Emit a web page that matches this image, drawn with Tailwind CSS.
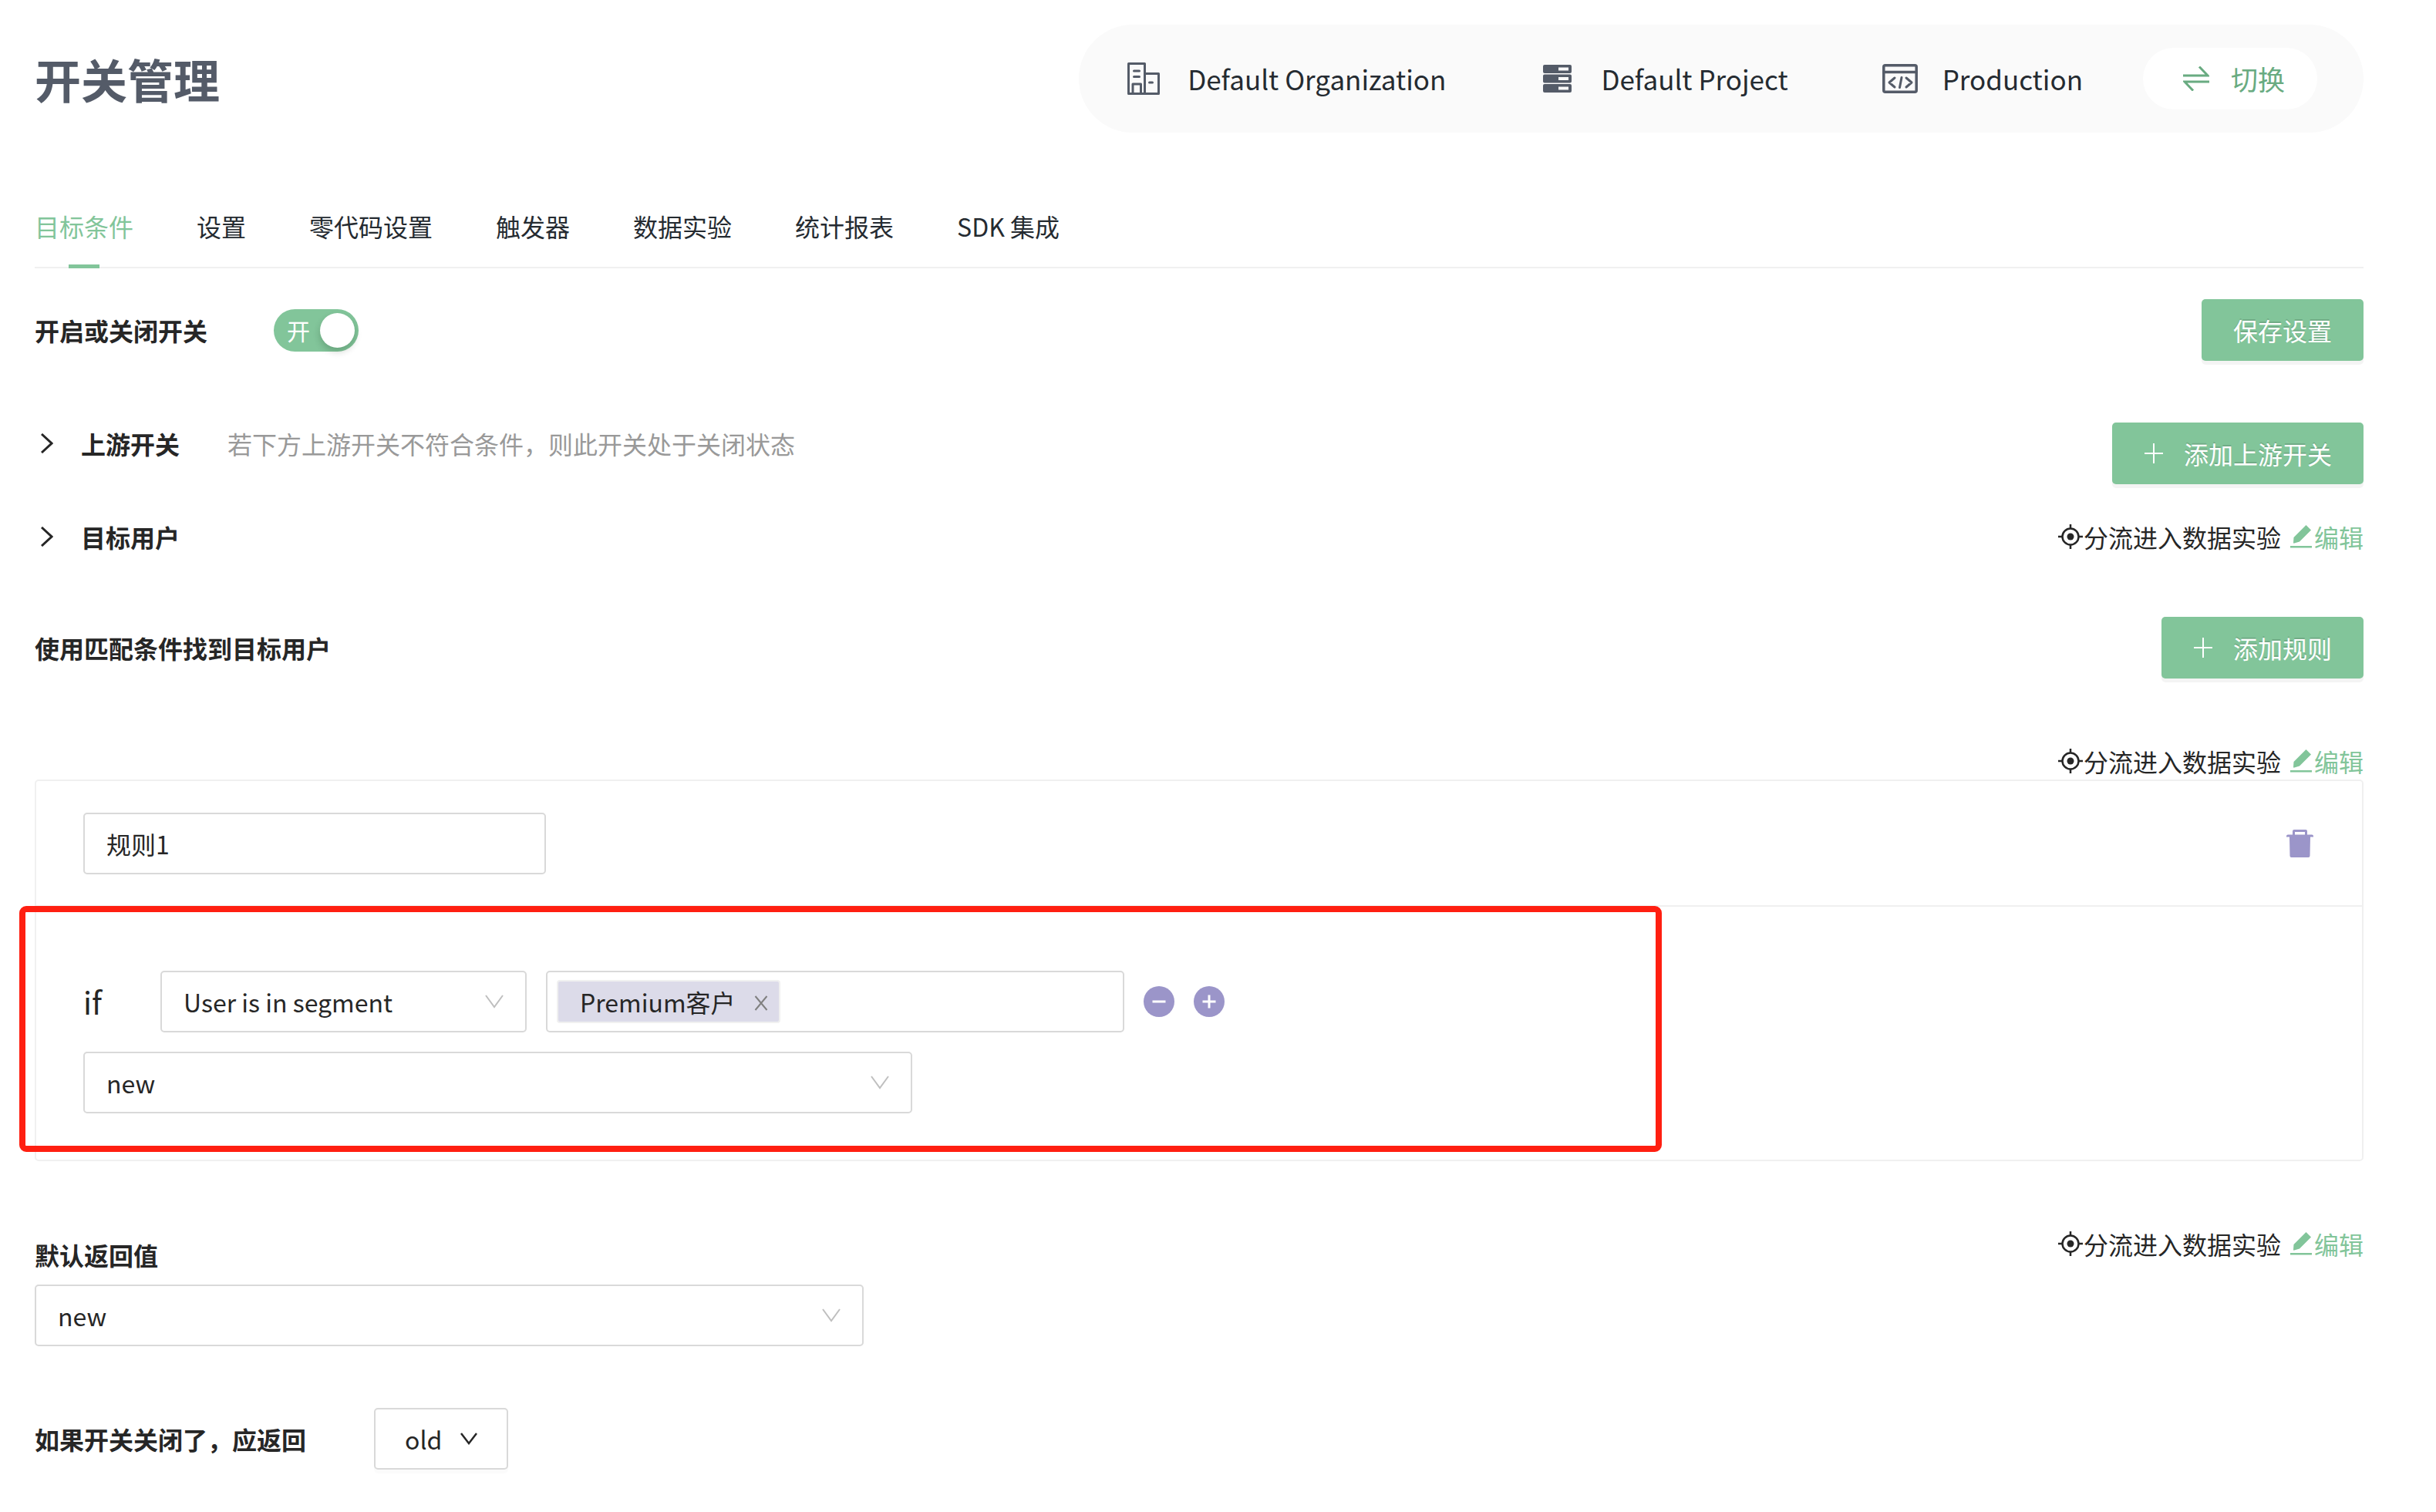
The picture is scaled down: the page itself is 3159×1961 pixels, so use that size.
<!DOCTYPE html>
<html lang="zh-CN">
<head>
<meta charset="utf-8">
<meta name="viewport" content="width=device-width, initial-scale=1">
<title>开关管理</title>
<script src="https://cdn.jsdelivr.net/npm/@tailwindcss/browser@4"></script>
</head>
<body class="bg-white text-[#262626] text-[32px] leading-[46px] font-['Noto_Sans_CJK_SC',sans-serif]">
<svg class="hidden" aria-hidden="true">
  <symbol id="down" viewBox="0 0 24 18"><path d="M1 1l11 15L23 1" fill="none" stroke="currentColor" stroke-width="2"/></symbol>
  <symbol id="right" viewBox="0 0 16 26"><path d="M1 1l13 12L1 25" fill="none" stroke="currentColor" stroke-width="3"/></symbol>
  <symbol id="plus" viewBox="0 0 26 26"><path d="M13 0v26M1 13h24" fill="none" stroke="currentColor" stroke-width="2"/></symbol>
  <symbol id="aim" viewBox="0 0 32 32"><circle cx="16" cy="16" r="10.5" fill="none" stroke="currentColor" stroke-width="2.5"/><circle cx="16" cy="16" r="4.5" fill="currentColor"/><path d="M16 0v6M16 26v6M0 16h6M26 16h6" stroke="currentColor" stroke-width="2.5"/></symbol>
  <symbol id="edit" viewBox="0 0 28 30"><path d="M0 27h28v2.500H0zM20.500 0l6.500 6.500L12 21.500l-7.500 2.200L4 23l.5-7z" fill="currentColor"/></symbol>
</svg>

<div class="pl-[45px] pr-[94px] pt-8 pb-[55px]">
  <header class="flex items-center justify-between">
    <h1 class="text-[60px] leading-[72px] font-bold text-[#545b68]">开关管理</h1>
    <div class="flex h-[140px] items-center rounded-full bg-[#fafafa] pl-[63px] pr-[60px] text-[35px] leading-[52px] text-[#252b31]">
      <svg class="mr-9 h-[42px] w-[42px] text-[#545b68]" viewBox="0 0 42 42" fill="none" stroke="currentColor" stroke-width="3" stroke-linejoin="round" aria-hidden="true"><path d="M1.500 40.500v-39h21v39zM22.500 14.500h18v26h-18M7 40V28h10.500v12"/><path d="M8.500 11h7M8.500 18.500h7M28.500 26h4" stroke-linecap="round"/></svg>
      <span class="mr-[126px]">Default Organization</span>
      <svg class="mr-[38px] h-9 w-[37px] text-[#545b68]" viewBox="0 0 37 36" aria-hidden="true"><path fill="currentColor" fill-rule="evenodd" d="M2 0h33q2 0 2 2v7q0 2-2 2H2q-2 0-2-2V2q0-2 2-2zM20 3.500v4h13v-4zM2 12.500h33q2 0 2 2v7q0 2-2 2H2q-2 0-2-2v-7q0-2 2-2zM20 16v4h13v-4zM2 25h33q2 0 2 2v7q0 2-2 2H2q-2 0-2-2v-7q0-2 2-2zM20 28.500v4h13v-4z"/></svg>
      <span class="mr-[122px]">Default Project</span>
      <svg class="mr-8 h-[38px] w-[46px] text-[#545b68]" viewBox="0 0 46 38" fill="none" stroke="currentColor" stroke-width="3.500" stroke-linejoin="round" stroke-linecap="round" aria-hidden="true"><rect x="1.800" y="1.800" width="42.400" height="34.400" rx="2"/><path d="M2 10.500h42"/><path d="M16 18l-7 6 7 6M31 18l7 6-7 6M25 17.500l-2.500 13" stroke-width="3"/></svg>
      <span class="mr-[78px]">Production</span>
      <button type="button" class="flex h-20 items-center rounded-full bg-white px-[42px] pl-[52px] text-[35px] text-[#69ab81]">
        <svg class="mr-7 h-8 w-[34px]" viewBox="0 0 34 32" fill="none" stroke="currentColor" stroke-width="3" aria-hidden="true"><path d="M0 12h32L21 .5M34 20H2l11 11.500"/></svg>切换
      </button>
    </div>
  </header>

  <nav class="mt-[70px] flex gap-[82px] border-b-2 border-[#f0f0f0] pt-7 text-[#252b31]">
    <a href="#target" class="relative pb-[30px] text-[#82c59a]">目标条件<span class="absolute -bottom-0.5 left-1/2 h-[5px] w-10 -translate-x-1/2 bg-[#82c59a]"></span></a>
    <a href="#settings">设置</a>
    <a href="#nocode">零代码设置</a>
    <a href="#triggers">触发器</a>
    <a href="#experiments">数据实验</a>
    <a href="#reports">统计报表</a>
    <a href="#sdk">SDK 集成</a>
  </nav>

  <main>
    <div class="mt-10 flex h-20 items-center">
      <span id="toggle-label" class="font-bold">开启或关闭开关</span>
      <button type="button" role="switch" aria-checked="true" aria-labelledby="toggle-label" class="ml-[86px] flex h-[55px] w-[110px] items-center justify-between rounded-full bg-[#82c59a] pl-[17px] pr-[5px] text-[30px] leading-[55px] text-white">开<span class="size-[45px] rounded-full bg-white shadow-[0_5px_10px_rgba(0,35,11,0.2)]"></span></button>
      <button type="button" class="ml-auto h-20 rounded-[5px] bg-[#82c59a] px-[41px] text-white shadow-[0_5px_0_rgba(0,0,0,0.045)] text-shadow-[0_-2px_0_rgb(0_0_0/0.12)]">保存设置</button>
    </div>

    <div class="mt-20 flex h-20 items-start">
      <button type="button" class="flex h-[54px] items-center pl-2 font-bold"><svg class="mr-9 h-[26px] w-4" aria-hidden="true"><use href="#right"/></svg>上游开关</button>
      <span class="ml-[62px] leading-[54px] text-[#999999]">若下方上游开关不符合条件，则此开关处于关闭状态</span>
      <button type="button" class="ml-auto flex h-20 items-center rounded-[5px] bg-[#82c59a] px-[41px] text-white shadow-[0_5px_0_rgba(0,0,0,0.045)] text-shadow-[0_-2px_0_rgb(0_0_0/0.12)]"><svg class="mr-[26px] size-[26px]" aria-hidden="true"><use href="#plus"/></svg>添加上游开关</button>
    </div>

    <div class="mt-[45px] flex items-center justify-between">
      <button type="button" class="flex items-center pl-2 font-bold"><svg class="mr-9 h-[26px] w-4" aria-hidden="true"><use href="#right"/></svg>目标用户</button>
      <div class="flex items-center"><svg class="mr-px size-8" aria-hidden="true"><use href="#aim"/></svg>分流进入数据实验<a href="#edit-users" class="ml-3 flex items-center text-[#82c59a]"><svg class="mr-[3px] h-[30px] w-7" aria-hidden="true"><use href="#edit"/></svg>编辑</a></div>
    </div>

    <div class="mt-[81px] flex items-center justify-between">
      <h2 class="font-bold">使用匹配条件找到目标用户</h2>
      <button type="button" class="flex h-20 items-center rounded-[5px] bg-[#82c59a] px-[41px] text-white shadow-[0_5px_0_rgba(0,0,0,0.045)] text-shadow-[0_-2px_0_rgb(0_0_0/0.12)]"><svg class="mr-[26px] size-[26px]" aria-hidden="true"><use href="#plus"/></svg>添加规则</button>
    </div>

    <div class="mt-[84px] mb-px flex justify-end">
      <div class="flex items-center"><svg class="mr-px size-8" aria-hidden="true"><use href="#aim"/></svg>分流进入数据实验<a href="#edit-rule" class="ml-3 flex items-center text-[#82c59a]"><svg class="mr-[3px] h-[30px] w-7" aria-hidden="true"><use href="#edit"/></svg>编辑</a></div>
    </div>

    <section class="rounded-[5px] border-2 border-[#f0f0f0]">
      <div class="flex items-center justify-between border-b-2 border-[#f0f0f0] pt-[41px] pr-[63px] pb-10 pl-[61px]">
        <input type="text" value="规则1" aria-label="规则名称" class="h-20 w-[600px] rounded-[5px] border-2 border-[#d9d9d9] px-7">
        <button type="button" aria-label="删除规则"><svg class="h-9 w-[35px] text-[#9b95c9]" viewBox="0 0 35 36" aria-hidden="true"><path fill="currentColor" fill-rule="evenodd" d="M10 0h15q2 0 2 2v4.500h6q2 0 2 2V9.500h-4L30.500 34q0 2-2 2h-22q-2 0-2-2L4 9.500H0V8.500q0-2 2-2h6V2q0-2 2-2zM11 3v3.500h13V3z"/></svg></button>
      </div>
      <div class="relative pt-[83px] pb-[60px] pl-[61px]">
        <div class="flex items-center">
          <span class="w-[100px] text-[40px] leading-[60px]">if</span>
          <div class="relative">
            <select aria-label="条件" class="block h-20 w-[475px] appearance-none rounded-[5px] border-2 border-[#d9d9d9] px-7"><option>User is in segment</option></select>
            <svg class="pointer-events-none absolute top-[31px] right-[30px] h-[18px] w-6 text-[#bfbfbf]" aria-hidden="true"><use href="#down"/></svg>
          </div>
          <div class="ml-[25px] flex h-20 w-[750px] items-center rounded-[5px] border-2 border-[#d9d9d9] px-3">
            <span class="flex h-[56px] items-center rounded-[4px] border-2 border-[#f0f0f0] bg-[#dcdbe9] pr-3.5 pl-7">Premium客户<button type="button" aria-label="移除" class="ml-6 text-[#808080]"><svg class="mt-1 h-5 w-[18px]" viewBox="0 0 18 20" aria-hidden="true"><path d="M1.500 1l15 18M16.500 1l-15 18" stroke="currentColor" stroke-width="2"/></svg></button></span>
            <input type="text" aria-label="用户分组" class="min-w-0 flex-1 outline-none">
          </div>
          <button type="button" aria-label="删除条件" class="ml-[25px]"><svg class="size-10" viewBox="0 0 40 40" aria-hidden="true"><circle cx="20" cy="20" r="20" fill="#9b95c9"/><path d="M11.500 20h17" stroke="#fff" stroke-width="3"/></svg></button>
          <button type="button" aria-label="添加条件" class="ml-[25px]"><svg class="size-10" viewBox="0 0 40 40" aria-hidden="true"><circle cx="20" cy="20" r="20" fill="#9b95c9"/><path d="M11.500 20h17M20 11.500v17" stroke="#fff" stroke-width="3"/></svg></button>
        </div>
        <div class="relative mt-[25px] w-[1075px]">
          <select aria-label="规则返回值" class="block h-20 w-full appearance-none rounded-[5px] border-2 border-[#d9d9d9] px-7"><option>new</option></select>
          <svg class="pointer-events-none absolute top-[31px] right-[30px] h-[18px] w-6 text-[#bfbfbf]" aria-hidden="true"><use href="#down"/></svg>
        </div>
        <div class="pointer-events-none absolute -top-px -left-[22px] h-[319px] w-[2130px] rounded-[9px] border-8 border-[#ff1f11]"></div>
      </div>
    </section>

    <div class="mt-[84px] flex items-start justify-between">
      <label for="default-value" class="mb-px leading-[75px] font-bold">默认返回值</label>
      <div class="flex items-center"><svg class="mr-px size-8" aria-hidden="true"><use href="#aim"/></svg>分流进入数据实验<a href="#edit-default" class="ml-3 flex items-center text-[#82c59a]"><svg class="mr-[3px] h-[30px] w-7" aria-hidden="true"><use href="#edit"/></svg>编辑</a></div>
    </div>
    <div class="relative w-[1075px]">
      <select id="default-value" class="block h-20 w-full appearance-none rounded-[5px] border-2 border-[#d9d9d9] px-7"><option>new</option></select>
      <svg class="pointer-events-none absolute top-[31px] right-[30px] h-[18px] w-6 text-[#bfbfbf]" aria-hidden="true"><use href="#down"/></svg>
    </div>

    <div class="mt-20 flex items-center">
      <span class="font-bold">如果开关关闭了，应返回</span>
      <button type="button" class="ml-[88px] flex h-20 items-center gap-6 rounded-[5px] border-2 border-[#d9d9d9] px-[38px] shadow-[0_5px_0_rgba(0,0,0,0.015)]">old<svg class="h-4 w-[22px]" viewBox="0 0 22 16" aria-hidden="true"><path d="M1 1l10 13L21 1" fill="none" stroke="currentColor" stroke-width="2.500"/></svg></button>
    </div>
  </main>
</div>
</body>
</html>
